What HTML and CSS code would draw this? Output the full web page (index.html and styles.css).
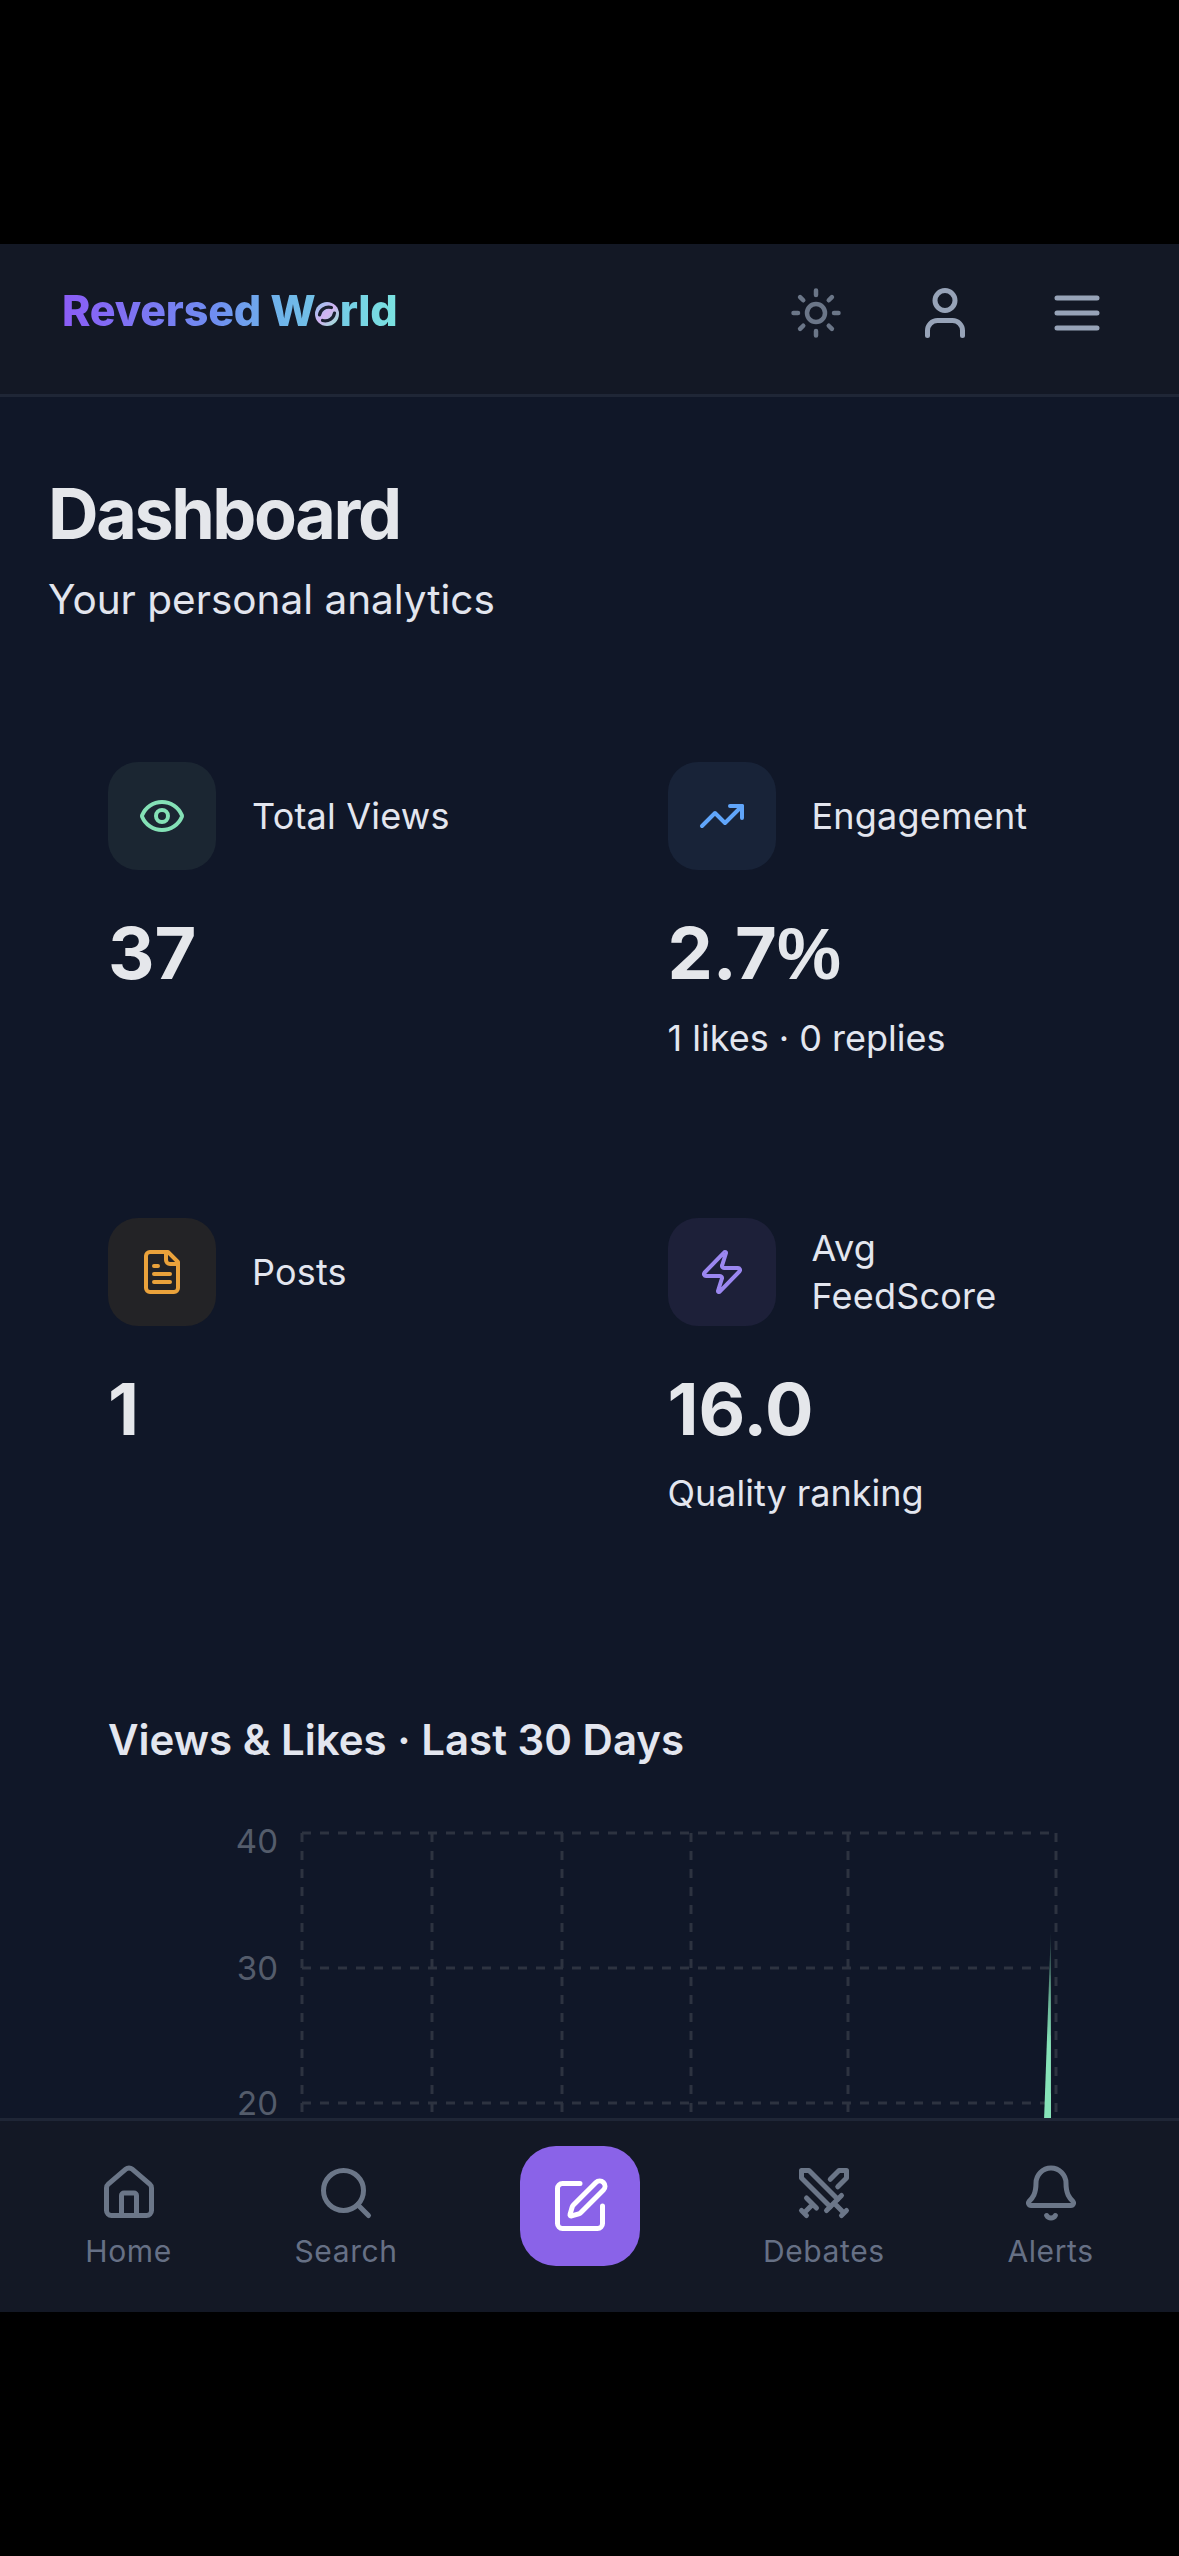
FILE: index.html
```html
<!DOCTYPE html>
<html lang="en">
<head>
  <meta charset="UTF-8">
  <title>Dashboard</title>
  <link rel="stylesheet" href="styles.css">
</head>
<body>
  <div class="screen">
    <header class="topbar">
      <div class="logo">Reversed W<span class="logo-o">o<svg viewBox="0 0 24 24"><defs><linearGradient id="globe" x1="0" y1="0" x2="1" y2="1"><stop offset="0" stop-color="#8fc4ee"/><stop offset="0.5" stop-color="#d3b2f2"/><stop offset="1" stop-color="#8fe8d0"/></linearGradient></defs><circle cx="12" cy="12" r="12" fill="url(#globe)"/><path d="M4.5 13C5 8 10 4 16.5 5.5M7.5 18.5c6 1.500 11-2 12-7.500" fill="none" stroke="#1a2030" stroke-width="3.2" stroke-linecap="round"/></svg></span>rld</div>
      <div class="topbar-icons">
        <svg class="icon icon-sun" viewBox="0 0 24 24"><circle cx="12" cy="12" r="4"/><path d="M12 2v2M12 20v2M4.930 4.930l1.410 1.410M17.660 17.660l1.410 1.410M2 12h2M20 12h2M6.340 17.660l-1.410 1.410M19.070 4.930l-1.410 1.410"/></svg>
        <svg class="icon icon-top" viewBox="0 0 24 24"><path d="M19 21v-2a4 4 0 0 0-4-4H9a4 4 0 0 0-4 4v2"/><circle cx="12" cy="7" r="4"/></svg>
        <svg class="icon icon-top" viewBox="0 0 24 24"><path d="M4 12h16M4 6h16M4 18h16"/></svg>
      </div>
    </header>

    <main class="content">
      <h1 class="title">Dashboard</h1>
      <p class="subtitle">Your personal analytics</p>

      <div class="stats">
        <div class="card">
          <div class="card-head">
            <div class="card-icon green"><svg class="icon" viewBox="0 0 24 24"><path d="M2.060 12.350a1 1 0 0 1 0-.7 10.750 10.750 0 0 1 19.880 0 1 1 0 0 1 0 .7 10.750 10.750 0 0 1-19.880 0"/><circle cx="12" cy="12" r="3"/></svg></div>
            <div class="card-label">Total Views</div>
          </div>
          <div class="card-value">37</div>
        </div>
        <div class="card">
          <div class="card-head">
            <div class="card-icon blue"><svg class="icon" viewBox="0 0 24 24"><path d="M16 7h6v6"/><path d="m22 7-8.500 8.500-5-5L2 17"/></svg></div>
            <div class="card-label">Engagement</div>
          </div>
          <div class="card-value">2.7<span class="percent">%</span></div>
          <div class="card-note">1 likes · 0 replies</div>
        </div>
        <div class="card">
          <div class="card-head">
            <div class="card-icon amber"><svg class="icon" viewBox="0 0 24 24"><path d="M15 2H6a2 2 0 0 0-2 2v16a2 2 0 0 0 2 2h12a2 2 0 0 0 2-2V7Z"/><path d="M14 2v4a2 2 0 0 0 2 2h4"/><path d="M10 9H8M16 13H8M16 17H8"/></svg></div>
            <div class="card-label">Posts</div>
          </div>
          <div class="card-value">1</div>
        </div>
        <div class="card">
          <div class="card-head">
            <div class="card-icon violet"><svg class="icon" viewBox="0 0 24 24"><path d="M4 14a1 1 0 0 1-.78-1.630l9.900-10.200a.5.5 0 0 1 .86.46l-1.920 6.020A1 1 0 0 0 13 10h7a1 1 0 0 1 .78 1.630l-9.900 10.200a.5.5 0 0 1-.86-.46l1.920-6.020A1 1 0 0 0 11 14z"/></svg></div>
            <div class="card-label">Avg<br>FeedScore</div>
          </div>
          <div class="card-value">16.0</div>
          <div class="card-note">Quality ranking</div>
        </div>
      </div>

      <section class="chart-card">
        <h2 class="chart-title">Views &amp; Likes · Last 30 Days</h2>
        <svg class="chart" viewBox="0 0 1179 420" width="1179" height="420">
          <defs>
            <linearGradient id="spike" x1="0" y1="0" x2="0" y2="1">
              <stop offset="0" stop-color="#86e3b8" stop-opacity="0.1"/>
              <stop offset="0.35" stop-color="#86e3b8" stop-opacity="0.75"/>
              <stop offset="0.6" stop-color="#86e3b8"/>
            </linearGradient>
          </defs>
          <g class="grid">
            <path d="M302 24H1056M302 159H1056M302 294H1056"/>
            <path d="M302 24V310M432 24V310M562 24V310M691 24V310M848 24V310M1056 24V310"/>
          </g>
          <path d="M1044 312 1050.800 123 1051 312Z" fill="url(#spike)"/>
          <g class="axis">
            <text x="278" y="44">40</text>
            <text x="278" y="171">30</text>
            <text x="278" y="306">20</text>
          </g>
        </svg>
      </section>
    </main>

    <nav class="bottom-nav">
      <div class="nav-item">
        <svg class="icon" viewBox="0 0 24 24"><path d="M15 21v-8a1 1 0 0 0-1-1h-4a1 1 0 0 0-1 1v8"/><path d="M3 10a2 2 0 0 1 .709-1.528l7-5.999a2 2 0 0 1 2.582 0l7 5.999A2 2 0 0 1 21 10v9a2 2 0 0 1-2 2H5a2 2 0 0 1-2-2z"/></svg>
        <span>Home</span>
      </div>
      <div class="nav-item">
        <svg class="icon" viewBox="0 0 24 24"><circle cx="11" cy="11" r="8"/><path d="m21 21-4.300-4.300"/></svg>
        <span>Search</span>
      </div>
      <div class="compose">
        <svg class="icon" viewBox="0 0 24 24"><path d="M12 3H5a2 2 0 0 0-2 2v14a2 2 0 0 0 2 2h14a2 2 0 0 0 2-2v-7"/><path d="M18.375 2.625a1 1 0 0 1 3 3l-9.013 9.014a2 2 0 0 1-.853.505l-2.873.84a.5.5 0 0 1-.62-.62l.84-2.873a2 2 0 0 1 .506-.852z"/></svg>
      </div>
      <div class="nav-item">
        <svg class="icon" viewBox="0 0 24 24"><path d="M14.500 17.500 3 6V3h3l11.500 11.500"/><path d="m13 19 6-6M16 16l4 4M19 21l2-2"/><path d="M14.500 6.500 18 3h3v3l-3.500 3.500"/><path d="m5 14 4 4M7 17l-3 3M3 19l2 2"/></svg>
        <span>Debates</span>
      </div>
      <div class="nav-item">
        <svg class="icon" viewBox="0 0 24 24"><path d="M10.268 21a2 2 0 0 0 3.464 0"/><path d="M3.262 15.326A1 1 0 0 0 4 17h16a1 1 0 0 0 .74-1.673C19.410 13.956 18 12.499 18 8A6 6 0 0 0 6 8c0 4.499-1.411 5.956-2.738 7.326"/></svg>
        <span>Alerts</span>
      </div>
    </nav>
  </div>
</body>
</html>
```

FILE: styles.css
```css
html, body {
  margin: 0;
  height: 100%;
  background-color: #000;
  font-family: Inter, "Noto Sans", sans-serif;
}

.screen {
  box-sizing: border-box;
  display: flex;
  flex-direction: column;
  width: 1179px;
  height: 2068px;
  margin-top: 244px;
  background-color: #101728;
  overflow: hidden;
}

.icon {
  fill: none;
  stroke: currentColor;
  stroke-width: 2;
  stroke-linecap: round;
  stroke-linejoin: round;
  flex: none;
}

/* Top bar */
.topbar {
  box-sizing: border-box;
  display: flex;
  justify-content: space-between;
  align-items: center;
  flex: none;
  height: 153px;
  padding: 0 72px 12px 62px;
  background-color: #131825;
  border-bottom: 3px solid #1f2636;
}

.logo {
  margin-bottom: 7px;
  font-size: 43px;
  font-weight: 800;
  letter-spacing: -0.2px;
  background: linear-gradient(90deg, #8b5cf6 0%, #6f8df0 45%, #6fb4ea 65%, #7ae2e0 100%);
  -webkit-background-clip: text;
  background-clip: text;
  color: transparent;
}

.logo-o {
  position: relative;
}

.logo-o svg {
  position: absolute;
  left: 2px;
  bottom: 10px;
  width: 24px;
  height: 24px;
}

.topbar-icons {
  display: flex;
  align-items: center;
  gap: 72px;
}

.topbar-icons .icon-sun {
  width: 54px;
  height: 54px;
  color: #6b7688;
}

.topbar-icons .icon-top {
  width: 60px;
  height: 60px;
  color: #97a3b8;
}

/* Main */
.content {
  flex: 1;
  min-height: 0;
  padding: 0 48px;
  overflow: hidden;
}

.title {
  margin: 75px 0 0;
  font-size: 70px;
  font-weight: 700;
  line-height: 84px;
  letter-spacing: -2.4px;
  color: #e5e7eb;
}

.subtitle {
  margin: 14px 0 0;
  font-size: 40.5px;
  line-height: 60px;
  color: #e2e5ee;
}

.stats {
  display: grid;
  grid-template-columns: 1fr 1fr;
  gap: 36px;
  margin-top: 72px;
}

.card {
  box-sizing: border-box;
  height: 420px;
  padding: 60px;
}

.card-head {
  display: flex;
  align-items: center;
  gap: 36px;
}

.card-icon {
  display: flex;
  justify-content: center;
  align-items: center;
  flex: none;
  width: 108px;
  height: 108px;
  border-radius: 30px;
}

.card-icon .icon {
  width: 48px;
  height: 48px;
}

.green { background-color: #1b2632; color: #84e1b6; }
.blue { background-color: #182338; color: #60a5fa; }
.amber { background-color: #232326; color: #eaa23b; }
.violet { background-color: #1d2039; color: #9b87f0; }

.card-label {
  font-size: 36px;
  line-height: 48px;
  letter-spacing: 0.2px;
  color: #e3e6ef;
}

.card-value {
  margin-top: 35px;
  font-size: 72px;
  font-weight: 700;
  line-height: 96px;
  color: #e5e7eb;
}

.percent {
  font-family: "Liberation Sans", Arial, sans-serif;
}

.card-note {
  margin-top: 12px;
  font-size: 36px;
  line-height: 48px;
  color: #e3e6ef;
}

.chart-card {
  margin: 0 -48px;
}

.chart-title {
  margin: 132px 0 0 108px;
  font-size: 42px;
  font-weight: 600;
  line-height: 60px;
  color: #e3e6ef;
}

.chart {
  display: block;
  margin-top: 39px;
}

.grid path {
  fill: none;
  stroke: #2d3340;
  stroke-width: 3;
  stroke-dasharray: 9 9;
}

.axis text {
  font-family: Inter, "Noto Sans", sans-serif;
  font-size: 33px;
  fill: #545c6b;
  text-anchor: end;
}

/* Bottom nav */
.bottom-nav {
  box-sizing: border-box;
  display: flex;
  justify-content: space-around;
  align-items: flex-start;
  flex: none;
  height: 194px;
  padding: 25px 24px 0;
  background-color: #131825;
  border-top: 3px solid #1f2636;
}

.nav-item {
  display: flex;
  flex-direction: column;
  align-items: center;
  gap: 8px;
  padding-top: 17px;
  font-size: 30px;
  line-height: 40px;
  letter-spacing: 0.6px;
  color: #667085;
}

.nav-item .icon {
  width: 60px;
  height: 60px;
  color: #6b7688;
}

.compose {
  display: flex;
  justify-content: center;
  align-items: center;
  width: 120px;
  height: 120px;
  border-radius: 36px;
  background-color: #8a63e8;
  color: #fff;
}

.compose .icon {
  width: 60px;
  height: 60px;
}
```
